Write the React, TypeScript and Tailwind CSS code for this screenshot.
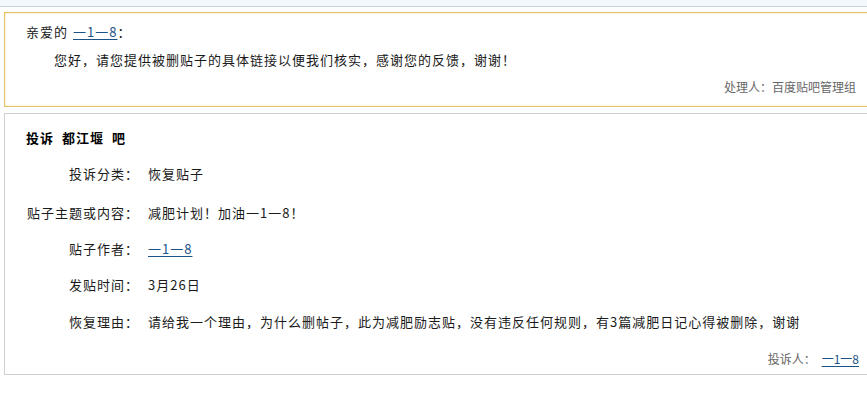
const font = { fontFamily: '"SimSun", "Noto Sans CJK SC", sans-serif' }

function UserLink() {
  return <a href="#" className="text-[#1b5386] underline underline-offset-2">一1一8</a>
}

const rows: { label: string; value: React.ReactNode; h: string }[] = [
  { label: '投诉分类：', value: '恢复贴子', h: 'h-[39px]' },
  { label: '贴子主题或内容：', value: '减肥计划！加油一1一8！', h: 'h-[36px]' },
  { label: '贴子作者：', value: <UserLink />, h: 'h-[36px]' },
  { label: '发贴时间：', value: '3月26日', h: 'h-[37px]' },
  { label: '恢复理由：', value: '请给我一个理由，为什么删帖子，此为减肥励志贴，没有违反任何规则，有3篇减肥日记心得被删除，谢谢', h: 'h-[36px]' },
]

export default function App() {
  return (
    <div className="w-[867px] h-[393px] overflow-hidden bg-white text-[13px] tracking-[1px] leading-[14px] text-[#1a1a1a]" style={font}>
      <div className="h-[7px] bg-[#f3f8fd] border-b border-[#c8d0da]"></div>

      <div className="mt-[5px] ml-[4px] w-[880px] h-[95px] border border-[#e3c466] shadow-[inset_0_0_3px_rgba(240,215,130,0.6)] bg-white pl-[21px] pt-[12px]">
        <div className="h-[14px]">
          亲爱的<span className="ml-[5px]"><UserLink /></span>：
        </div>
        <div className="mt-[14px] pl-[28px] h-[14px]">
          您好，请您提供被删贴子的具体链接以便我们核实，感谢您的反馈，谢谢！
        </div>
        <div className="mt-[13px] w-[830px] text-right text-[12px] tracking-normal text-[#666] h-[14px]">处理人：百度贴吧管理组</div>
      </div>

      <div className="mt-[6px] ml-[4px] w-[880px] h-[262px] border border-[#cfcfcf] bg-white pl-[21px] pt-[17px]">
        <div className="h-[14px] font-bold text-black flex gap-[8px]">
          <span>投诉</span>
          <span>都江堰</span>
          <span>吧</span>
        </div>
        <div className="mt-[22px]">
          {rows.map((r, i) => (
            <div key={i} className={`flex ${r.h}`}>
              <div className="w-[113px] text-right">{r.label}</div>
              <div className="ml-[9px] whitespace-nowrap">{r.value}</div>
            </div>
          ))}
        </div>
        <div className="mt-[1px] w-[833px] text-right text-[12px] tracking-normal text-[#666] h-[14px]">
          投诉人：<span className="ml-[6px]"><UserLink /></span>
        </div>
      </div>
    </div>
  )
}
